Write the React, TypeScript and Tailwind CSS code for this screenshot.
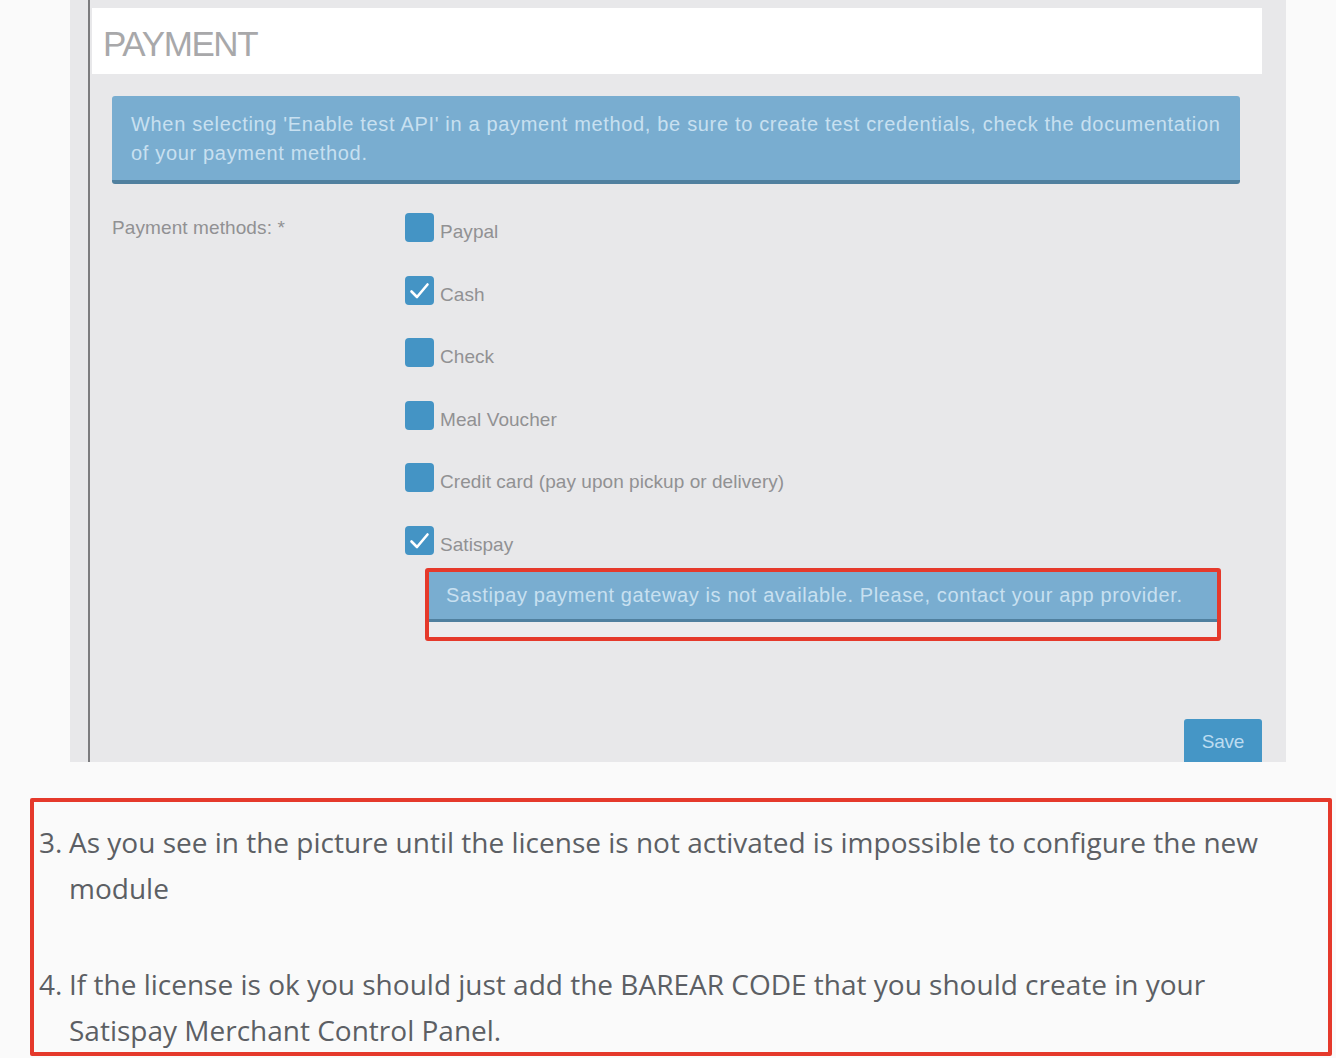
import { useState } from "react"

const methods = [
  { label: "Paypal", checked: false },
  { label: "Cash", checked: true },
  { label: "Check", checked: false },
  { label: "Meal Voucher", checked: false },
  { label: "Credit card (pay upon pickup or delivery)", checked: false },
  { label: "Satispay", checked: true },
]

function CheckBox({ checked }: { checked: boolean }) {
  return (
    <span className="flex h-[29px] w-[29px] shrink-0 items-center justify-center rounded-[4px] bg-[#4494c5]">
      {checked && (
        <svg viewBox="0 0 29 29" className="h-[29px] w-[29px]">
          <path d="M6.5 15.5 L12 21 L22.5 8.5" fill="none" stroke="white" strokeWidth="2.6" strokeLinecap="round" strokeLinejoin="round" />
        </svg>
      )}
    </span>
  )
}

export default function App() {
  const [items] = useState(methods)

  return (
    <div className="h-[1058px] w-[1336px] overflow-hidden bg-[#fafafa] font-['Liberation_Sans',Arial,sans-serif]">
      {/* screenshot of the admin panel */}
      <div className="ml-[70px] flex h-[762px] w-[1216px] overflow-hidden bg-[#e8e8ea]">
        <div className="w-[18px] shrink-0" />
        <div className="w-[2px] shrink-0 bg-[#7c7c7e]" />
        <div className="flex flex-1 flex-col pl-[2px] pr-[24px] pt-[8px]">
          <div className="flex h-[66px] items-center bg-white pl-[11px] pt-[4px]">
            <h1 className="text-[35px] leading-none tracking-[-1.4px] text-[#a8a8aa]">PAYMENT</h1>
          </div>

          <div className="pl-[20px] pr-[22px]">
            <div className="mt-[22px] h-[88px] rounded-[3px] border-b-[4px] border-[#50809f] bg-[#79add0] pl-[19px] pr-[8px] pt-[14px] text-[20px] leading-[29px] tracking-[0.67px] text-[#c8e0f0]">
              When selecting 'Enable test API' in a payment method, be sure to create test credentials, check the documentation
              of your payment method.
            </div>

            <div className="mt-[29px] flex">
              <div className="w-[293px] shrink-0 pt-[3px] text-[19px] leading-[24px] tracking-[0.1px] text-[#919193]">
                Payment methods: *
              </div>
              <div className="flex flex-col">
                <div className="flex flex-col gap-[24.6px]">
                  {items.map((m) => (
                    <div key={m.label} className="flex h-[38px] items-start">
                      <CheckBox checked={m.checked} />
                      <span className="ml-[6px] text-[19px] leading-[38px] tracking-[0.05px] text-[#919193]">{m.label}</span>
                    </div>
                  ))}
                </div>

                <div className="ml-[20px] mt-[4px] w-[796px] rounded-[3px] border-[4px] border-[#e5392b]">
                  <div className="h-[50px] border-b-[3px] border-[#50809f] bg-[#79add0] pl-[17px] pt-[9px] text-[20px] leading-[28px] tracking-[0.6px] text-[#c8e0f0]">
                    Sastipay payment gateway is not available. Please, contact your app provider.
                  </div>
                  <div className="h-[15px] bg-[#ececee]" />
                </div>
              </div>
            </div>
          </div>

          <div className="mt-auto flex justify-end">
            <button className="h-[43px] w-[78px] rounded-t-[3px] bg-[#4596c6] pt-[4px] text-[19px] tracking-[-0.2px] text-[#bcdcf0]">
              Save
            </button>
          </div>
        </div>
      </div>

      {/* annotated instructions */}
      <div className="ml-[30px] mt-[36px] h-[258px] w-[1302px] rounded-[2px] border-[4px] border-[#e5392b] pl-[5px] pt-[17px] font-['Open_Sans',sans-serif] text-[28px] leading-[46px] text-[#5c5f64]">
        <div className="flex">
          <span className="w-[30px] shrink-0">3.</span>
          <p className="w-[1200px]">
            As you see in the picture until the license is not activated is impossible to configure the new module
          </p>
        </div>
        <div className="mt-[50px] flex">
          <span className="w-[30px] shrink-0">4.</span>
          <p className="w-[1200px]">
            If the license is ok you should just add the BAREAR CODE that you should create in your Satispay Merchant Control
            Panel.
          </p>
        </div>
      </div>
    </div>
  )
}
